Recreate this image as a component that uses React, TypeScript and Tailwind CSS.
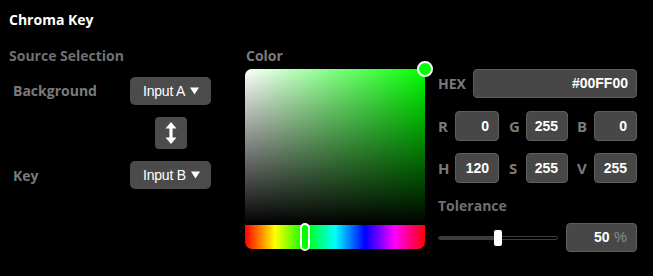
import React from "react";

const lbl = "font-['Open_Sans','Noto_Sans',sans-serif] font-bold text-[14px] leading-[20px]";
const num = "font-['Liberation_Sans',Arial,sans-serif] font-bold text-[14px] text-white";

function Caret() {
  return (
    <svg width="9" height="8" viewBox="0 0 9 8" className="block">
      <path d="M0 0.5 H9 L4.5 7.5 Z" fill="#fff" />
    </svg>
  );
}

function Dropdown({ label }: { label: string }) {
  return (
    <div className="flex h-[28px] w-[81px] items-center rounded-[5px] bg-[#4b4b4b] pl-[13px] pr-[10px]">
      <span className="font-['Liberation_Sans',Arial,sans-serif] text-[14px] leading-none text-white tracking-[-0.2px]">
        {label}
      </span>
      <span className="ml-[5px]">
        <Caret />
      </span>
    </div>
  );
}

function NumBox({ value, w }: { value: string; w: string }) {
  return (
    <div
      className={`flex h-[30px] ${w} items-center justify-end rounded-[4px] border border-[#5e5e5e] bg-[#474747] pr-[9px] ${num}`}
    >
      {value}
    </div>
  );
}

function Lab({ t, cls = "" }: { t: string; cls?: string }) {
  return <div className={`${lbl} text-[15px] w-[17px] text-[#7a7a7a] ${cls}`}>{t}</div>;
}

export default function App() {
  return (
    <div className="h-[276px] w-[653px] overflow-hidden bg-black">
      <div className="pl-[9px] pt-[9px] font-['Open_Sans','Noto_Sans',sans-serif] text-[14px] font-bold leading-[22px] text-white">
        Chroma Key
      </div>
      <div className="mt-[15px] flex">
        {/* Left */}
        <div className="w-[245px] shrink-0 pl-[9px]">
          <div className={`${lbl} text-[#707070]`}>Source Selection</div>
          <div className="mt-[11px] grid grid-cols-[121px_81px] gap-y-[12px] items-center">
            <div className={`${lbl} pl-[4px] text-[#7a7a7a]`}>Background</div>
            <Dropdown label="Input A" />
            <div />
            <div className="flex justify-center">
              <div className="flex h-[32px] w-[32px] items-center justify-center rounded-[4px] bg-[#4b4b4b]">
                <svg width="12" height="22" viewBox="0 0 12 22">
                  <path d="M6 0 L11.5 6.5 H7.6 V15.5 H11.5 L6 22 L0.5 15.5 H4.4 V6.5 H0.5 Z" fill="#fff" />
                </svg>
              </div>
            </div>
            <div className={`${lbl} pl-[4px] pt-[1px] text-[#7a7a7a]`}>Key</div>
            <Dropdown label="Input B" />
          </div>
        </div>

        {/* Middle */}
        <div className="w-[193px] shrink-0">
          <div className={`${lbl} pl-[1px] text-[#7a7a7a]`}>Color</div>
          <div className="relative mt-[3px] h-[180px] w-[180px]">
            <div className="flex h-full w-full flex-col overflow-hidden rounded-[7px]">
              <div className="relative h-[156px] w-full bg-[#00ff00]">
                <div className="absolute inset-0 bg-[linear-gradient(to_right,#ffffff,rgba(255,255,255,0))]" />
                <div className="absolute inset-0 bg-[linear-gradient(to_bottom,rgba(0,0,0,0),#000000)]" />
              </div>
              <div className="h-[24px] w-full bg-[linear-gradient(to_right,#ff0000,#ffff00_16.67%,#00ff00_33.33%,#00ffff_50%,#0000ff_66.67%,#ff00ff_83.33%,#ff0000)]" />
            </div>
            <div className="absolute left-[172px] top-[-8px] h-[16px] w-[16px] rounded-full border-2 border-white bg-[#00ff00]" />
            <div className="absolute left-[55px] top-[154px] h-[28px] w-[10px] rounded-full border-2 border-white bg-[#00ff00]" />
          </div>
        </div>

        {/* Right */}
        <div className="w-[199px] shrink-0 pt-[23px]">
          <div className="flex h-[29px] items-center">
            <div className={`${lbl} w-[35px] text-[#7a7a7a]`}>HEX</div>
            <div className={`flex h-[29px] w-[164px] items-center justify-end rounded-[4px] border border-[#5e5e5e] bg-[#474747] pr-[8px] ${num}`}>
              #00FF00
            </div>
          </div>
          <div className="mt-[13px] flex items-center">
            <Lab t="R" />
            <NumBox value="0" w="w-[44px]" />
            <Lab t="G" cls="ml-[10px]" />
            <NumBox value="255" w="w-[42px]" />
            <Lab t="B" cls="ml-[9px]" />
            <NumBox value="0" w="w-[43px]" />
          </div>
          <div className="mt-[12px] flex items-center">
            <Lab t="H" />
            <NumBox value="120" w="w-[44px]" />
            <Lab t="S" cls="ml-[10px]" />
            <NumBox value="255" w="w-[42px]" />
            <Lab t="V" cls="ml-[9px]" />
            <NumBox value="255" w="w-[43px]" />
          </div>
          <div className={`${lbl} mt-[13px] text-[#707070]`}>Tolerance</div>
          <div className="mt-[7px] flex h-[29px] items-center">
            <div className="relative flex h-[16px] w-[120px] items-center">
              <div className="flex h-[4px] w-full overflow-hidden rounded-full border border-[#3c3c3c]">
                <div className="h-full w-[56px] bg-[#3c3c3c]" />
              </div>
              <div className="absolute left-[56px] top-0 h-[16px] w-[8px] rounded-[2px] bg-white" />
            </div>
            <div className="ml-[8px] flex h-[29px] w-[71px] items-center justify-end rounded-[4px] border border-[#5e5e5e] bg-[#474747] pr-[9px]">
              <span className={num}>50</span>
              <span className="ml-[4px] font-['Liberation_Sans',Arial,sans-serif] text-[15px] text-[#8a8a8a]">%</span>
            </div>
          </div>
        </div>
      </div>
    </div>
  );
}
